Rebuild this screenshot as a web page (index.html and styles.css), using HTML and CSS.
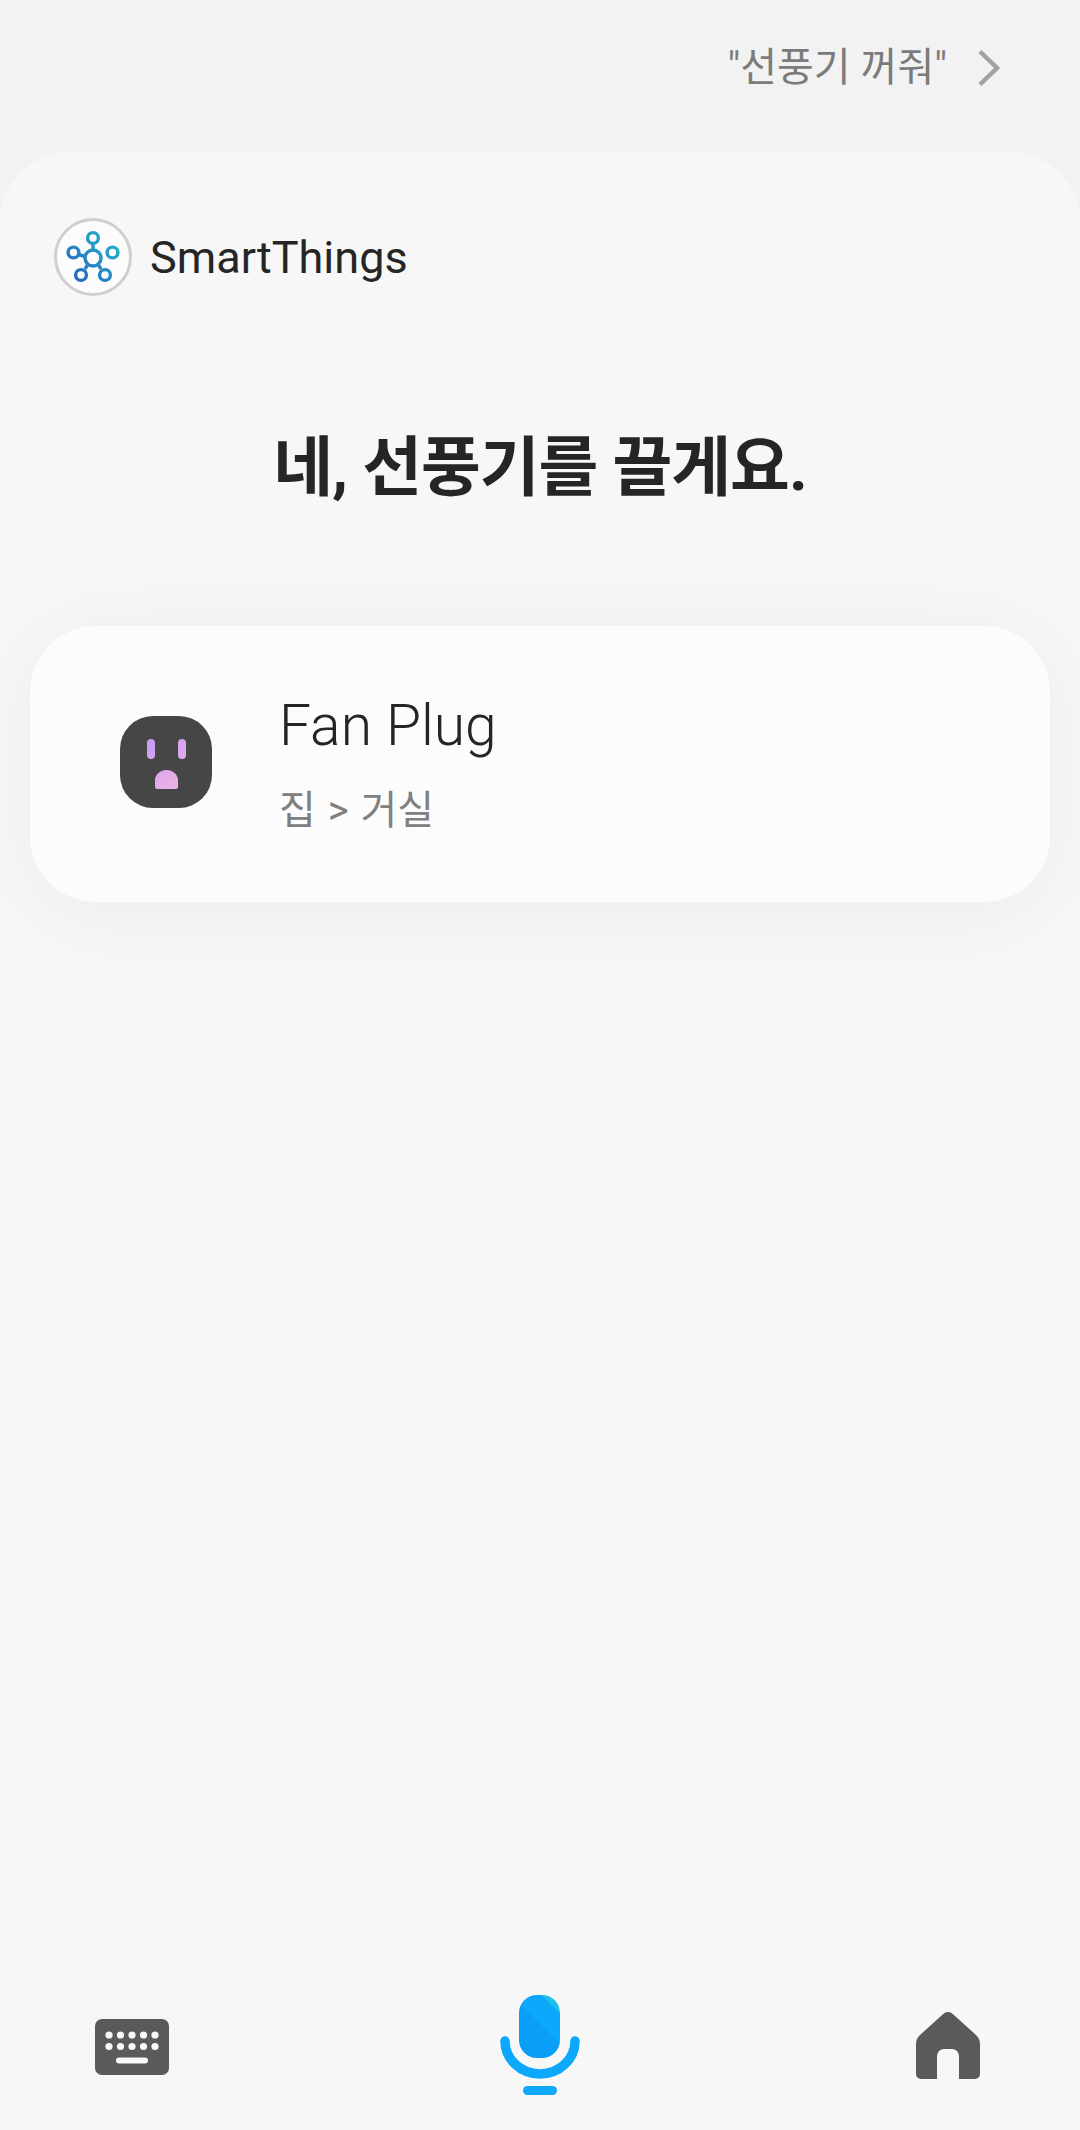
FILE: index.html
```html
<!DOCTYPE html>
<html lang="ko">

<head>
    <meta charset="UTF-8">
    <meta name="viewport" content="width=device-width, initial-scale=1.0">
    <title>SmartThings</title>
    <link rel="stylesheet" href="styles.css">
</head>

<body>
    <div class="container">
        <div class="hintBar">
            <span class="hintText">"선풍기 꺼줘"</span>
            <svg class="hintArrow" width="24" height="38" viewBox="0 0 24 38">
                <path d="M3 2.5 L20 19 L3 35.5" fill="none" stroke="#a2a2a2" stroke-width="4.5" />
            </svg>
        </div>

        <div class="panel">
            <div class="appRow">
                <svg class="appLogo" width="78" height="78" viewBox="0 0 78 78">
                    <defs>
                        <linearGradient id="logoBlue" gradientUnits="userSpaceOnUse" x1="62" y1="18" x2="18" y2="62">
                            <stop offset="0" stop-color="#1fb8cc" />
                            <stop offset="1" stop-color="#2a62bd" />
                        </linearGradient>
                    </defs>
                    <circle cx="39" cy="39" r="37.5" fill="#fcfcfc" stroke="#cfcfcf" stroke-width="3" />
                    <g fill="none" stroke="url(#logoBlue)" stroke-width="3.4">
                        <circle cx="39" cy="40" r="8" />
                        <circle cx="39" cy="20" r="5.4" />
                        <circle cx="19.5" cy="34.5" r="5.4" />
                        <circle cx="58.5" cy="34.5" r="5.4" />
                        <circle cx="27" cy="57" r="5.4" />
                        <circle cx="51" cy="57" r="5.4" />
                        <path d="M39 25.4 V32 M24.5 36.5 L31.5 38.6 M33.5 47 L31 51 M44.5 47 L47 51" />
                    </g>
                </svg>
                <span class="appName">SmartThings</span>
            </div>

            <h1 class="answer">네, 선풍기를 끌게요.</h1>

            <div class="deviceCard">
                <svg class="deviceIcon" width="92" height="92" viewBox="0 0 92 92">
                    <defs>
                        <linearGradient id="plugPink" gradientUnits="userSpaceOnUse" x1="20" y1="20" x2="66" y2="76">
                            <stop offset="0" stop-color="#c198f8" />
                            <stop offset="1" stop-color="#f4b6e2" />
                        </linearGradient>
                    </defs>
                    <rect width="92" height="92" rx="33" fill="#464646" />
                    <rect x="27" y="23" width="8" height="20" rx="4" fill="url(#plugPink)" />
                    <rect x="58" y="23" width="8" height="20" rx="4" fill="url(#plugPink)" />
                    <path d="M35 64.5 a11.5 10.5 0 0 1 23 0 V71 a2 2 0 0 1 -2 2 H37 a2 2 0 0 1 -2 -2 Z" fill="url(#plugPink)" />
                </svg>
                <div class="deviceInfo">
                    <div class="deviceName">Fan Plug</div>
                    <div class="devicePlace">집 &gt; 거실</div>
                </div>
            </div>

            <div class="bottomBar">
                <svg class="keyIcon" width="74" height="56" viewBox="0 0 74 56">
                    <rect width="74" height="56" rx="7" fill="#5a5a5a" />
                    <g fill="#f8f8f8">
                        <circle cx="14" cy="16" r="3.6" />
                        <circle cx="25.5" cy="16" r="3.6" />
                        <circle cx="37" cy="16" r="3.6" />
                        <circle cx="48.5" cy="16" r="3.6" />
                        <circle cx="60" cy="16" r="3.6" />
                        <circle cx="14" cy="27.5" r="3.6" />
                        <circle cx="25.5" cy="27.5" r="3.6" />
                        <circle cx="37" cy="27.5" r="3.6" />
                        <circle cx="48.5" cy="27.5" r="3.6" />
                        <circle cx="60" cy="27.5" r="3.6" />
                        <rect x="21" y="38.5" width="32" height="6" rx="3" />
                    </g>
                </svg>
                <svg class="micIcon" width="80" height="100" viewBox="0 0 80 100">
                    <defs>
                        <linearGradient id="micTip" gradientUnits="userSpaceOnUse" x1="19" y1="44" x2="63" y2="0">
                            <stop offset="0" stop-color="#0a9ef6" />
                            <stop offset="0.42" stop-color="#0a9ef6" />
                            <stop offset="0.42" stop-color="#0ba8fb" />
                            <stop offset="0.76" stop-color="#0ba8fb" />
                            <stop offset="0.76" stop-color="#1cc0ea" />
                        </linearGradient>
                    </defs>
                    <rect x="19" y="0" width="41" height="63" rx="18" fill="url(#micTip)" />
                    <path d="M5 46 A35 33 0 0 0 75 46" fill="none" stroke="#0ba8fb" stroke-width="9.5" stroke-linecap="round" />
                    <rect x="23" y="91" width="34" height="9" rx="4.5" fill="#0ba8fb" />
                </svg>
                <svg class="homeIcon" width="64" height="68" viewBox="0 0 64 68">
                    <path d="M27.5 1.8 a6.5 6.5 0 0 1 9 0 L60 23 a12 12 0 0 1 4 9 V62 a5 5 0 0 1 -5 5 H43 V44 a7 7 0 0 0 -7 -7 H28 a7 7 0 0 0 -7 7 V67 H5 a5 5 0 0 1 -5 -5 V32 a12 12 0 0 1 4 -9 Z" fill="#5a5a5a" />
                </svg>
            </div>
        </div>
    </div>
</body>

</html>
```

FILE: styles.css
```css
* {
    box-sizing: border-box;
}

body {
    margin: 0;
    padding: 0;
    font-family: Roboto, "Noto Sans CJK KR", sans-serif;
}

.container {
    width: 1080px;
    height: 2130px;
    background-color: #f2f2f2;
    display: flex;
    flex-direction: column;
    overflow: hidden;
}

/* top hint */
.hintBar {
    height: 152px;
    flex-shrink: 0;
    display: flex;
    justify-content: flex-end;
    align-items: flex-start;
    gap: 30px;
    padding: 49px 79px 0 0;
}

.hintText {
    font-size: 40px;
    line-height: 38px;
    color: #7b7b7b;
}

.hintArrow {
    flex-shrink: 0;
}

/* main panel */
.panel {
    flex: 1;
    background-color: #f7f7f7;
    border-radius: 70px 70px 0 0;
    display: flex;
    flex-direction: column;
    padding: 66px 30px 35px;
}

.appRow {
    display: flex;
    align-items: center;
    gap: 18px;
    padding-left: 24px;
}

.appName {
    font-size: 45px;
    color: #252525;
}

.answer {
    margin: 130px 0 0;
    font-size: 65px;
    line-height: 84px;
    font-weight: 700;
    text-align: center;
    color: #252525;
    letter-spacing: -1px;
}

/* device card */
.deviceCard {
    margin-top: 116px;
    height: 276px;
    background-color: #fcfcfc;
    border-radius: 66px;
    box-shadow: 0 10px 90px rgba(0, 0, 0, 0.05);
    display: flex;
    align-items: center;
    gap: 67px;
    padding-left: 90px;
}

.deviceIcon {
    flex-shrink: 0;
    margin-bottom: 4px;
}

.deviceInfo {
    padding-bottom: 2px;
}

.deviceName {
    font-size: 57px;
    line-height: 70px;
    font-weight: 300;
    color: #252525;
}

.devicePlace {
    margin-top: 25px;
    font-size: 40px;
    line-height: 50px;
    word-spacing: 2px;
    color: #808080;
}

/* bottom icons */
.bottomBar {
    margin-top: auto;
    display: flex;
    justify-content: space-between;
    align-items: center;
    padding: 0 70px 0 65px;
}

.keyIcon {
    margin-top: 3px;
}

.micIcon {
    margin-right: 5px;
}

.homeIcon {
    margin-top: 1px;
}
```
